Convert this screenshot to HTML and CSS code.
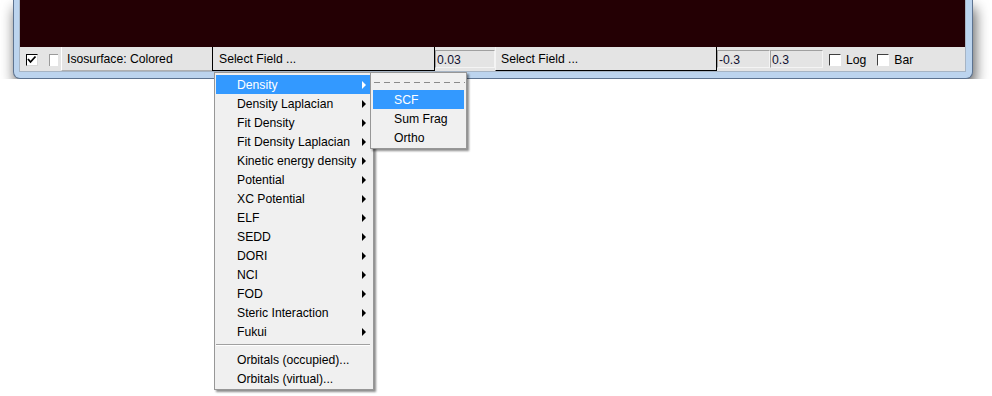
FILE: index.html
```html
<!DOCTYPE html>
<html>
<head>
<meta charset="utf-8">
<link rel="stylesheet" href="styles.css">
</head>
<body>
<div class="win">
  <div class="inner">
    <div class="viewport"></div>
    <div class="bar">
      <span class="cb checked"><svg width="10" height="10" viewBox="0 0 10 10"><path d="M1 4 L3.5 7 L8.5 1.5" fill="none" stroke="#000" stroke-width="1.8"/></svg></span>
      <span class="cb cut"></span>
      <span class="lbl">Isosurface: Colored</span>
      <span class="btn first">Select Field ...</span>
      <span class="field w59">0.03</span>
      <span class="btn second">Select Field ...</span>
      <span class="field w52">-0.3</span>
      <span class="field w52">0.3</span>
      <span class="cb opt"></span><span class="opttext">Log</span>
      <span class="cb opt bar2"></span><span class="opttext">Bar</span>
    </div>
  </div>
</div>

<div class="menu main">
  <div class="item hl">Density<i class="arr"></i></div>
  <div class="item">Density Laplacian<i class="arr"></i></div>
  <div class="item">Fit Density<i class="arr"></i></div>
  <div class="item">Fit Density Laplacian<i class="arr"></i></div>
  <div class="item">Kinetic energy density<i class="arr"></i></div>
  <div class="item">Potential<i class="arr"></i></div>
  <div class="item">XC Potential<i class="arr"></i></div>
  <div class="item">ELF<i class="arr"></i></div>
  <div class="item">SEDD<i class="arr"></i></div>
  <div class="item">DORI<i class="arr"></i></div>
  <div class="item">NCI<i class="arr"></i></div>
  <div class="item">FOD<i class="arr"></i></div>
  <div class="item">Steric Interaction<i class="arr"></i></div>
  <div class="item">Fukui<i class="arr"></i></div>
  <div class="sep"></div>
  <div class="item">Orbitals (occupied)...</div>
  <div class="item">Orbitals (virtual)...</div>
</div>

<div class="menu sub">
  <div class="tear"></div>
  <div class="item hl">SCF</div>
  <div class="item">Sum Frag</div>
  <div class="item">Ortho</div>
</div>
</body>
</html>
```
FILE: styles.css
```css
html, body {
  margin: 0;
  padding: 0;
  background: #ffffff;
  font-family: "Liberation Sans", Arial, sans-serif;
  font-size: 12.2px;
  color: #000;
}

.win {
  margin-left: 13px;
  width: 960px;
  box-sizing: border-box;
  background: #bcd4ee;
  border: 1px solid #5d7390;
  border-top: none;
  border-radius: 0 0 7px 7px;
  padding: 0 6px 6px 6px;
  box-shadow: 2px 8px 14px rgba(0, 0, 0, 0.65);
}

.inner {
  border-right: 1px solid #a6b4c4;
  border-bottom: 1px solid #a6b4c4;
  border-left: 1px solid #a6b4c4;
  margin-left: -1px;
}

.viewport {
  height: 47px;
  background: #240004;
}

.bar {
  height: 24px;
  background: #e4e4e4;
  display: flex;
  align-items: stretch;
  padding-left: 6px;
}

.cb {
  width: 12px;
  height: 12px;
  box-sizing: border-box;
  background: #fff;
  border: 1px solid #000;
  border-right-color: #fff;
  border-bottom-color: #fff;
  align-self: flex-start;
  margin-top: 7px;
  position: relative;
}
.cb.checked {
  border-right-color: #d8d8d8;
  border-bottom-color: #d8d8d8;
}
.cb.checked svg {
  display: block;
  margin: 0;
}
.cb.cut {
  width: 9px;
  margin-left: 11px;
  border-color: #9a9a9a;
  border-right: none;
  border-bottom: none;
}
.cb.opt {
  margin-left: 6px;
  border-color: #404040;
  border-right-color: #fff;
  border-bottom-color: #fff;
}
.cb.bar2 {
  margin-left: 11px;
}

.lbl {
  margin-left: 3px;
  width: 151px;
  box-sizing: border-box;
  border-left: 1px solid #ffffff;
  border-bottom: 1px solid #b0b0b0;
  padding-left: 5px;
  padding-top: 1px;
  display: flex;
  align-items: center;
}

.btn {
  box-sizing: border-box;
  display: flex;
  align-items: center;
  padding-top: 1px;
  border-bottom: 1px solid #000;
  border-right: 1px solid #000;
}
.btn.first {
  width: 223px;
  border-left: 1px solid #000;
  padding-left: 6px;
}
.btn.second {
  width: 222px;
  border-left: 1px solid #f4f4f4;
  padding-left: 5px;
}

.field {
  box-sizing: border-box;
  height: 18px;
  align-self: flex-start;
  margin-top: 3px;
  border: 1px solid #a0a0a0;
  border-right-color: #f4f4f4;
  border-bottom-color: #f4f4f4;
  display: flex;
  align-items: center;
  padding-left: 1px;
  padding-top: 1px;
  color: #101030;
}
.w59 { width: 60px; }
.w52 { width: 53px; }

.opttext {
  display: flex;
  align-items: center;
  margin-left: 5px;
  padding-top: 1px;
}

.menu {
  position: absolute;
  box-sizing: border-box;
  background: #f0f0f0;
  border: 1px solid #979797;
  box-shadow: 2px 2px 2px rgba(0, 0, 0, 0.45);
}
.menu.main {
  left: 214px;
  top: 72px;
  width: 160px;
  padding: 2px 3px 1px 1px;
}
.menu.sub {
  left: 370px;
  top: 72px;
  width: 97px;
  padding: 2px 2px 1px 2px;
}

.item {
  position: relative;
  height: 18px;
  padding-top: 1px;
  line-height: 19px;
  padding-left: 21px;
  white-space: nowrap;
}
.item.hl {
  background: #3399ff;
  color: #fff;
}

.arr {
  position: absolute;
  right: 4px;
  top: 6px;
  width: 0;
  height: 0;
  border-left: 4px solid #000;
  border-top: 4px solid transparent;
  border-bottom: 4px solid transparent;
}
.item.hl .arr {
  border-left-color: #fff;
}

.sep {
  height: 9px;
  box-sizing: border-box;
  padding-top: 3px;
}
.sep::before {
  content: "";
  display: block;
  height: 1px;
  background: #a0a0a0;
  border-bottom: 1px solid #ffffff;
}

.tear {
  height: 15px;
  position: relative;
}
.tear::before {
  content: "";
  position: absolute;
  left: 1px;
  right: -1px;
  top: 7px;
  height: 1px;
  background: repeating-linear-gradient(90deg, #8a8a8a 0 6px, transparent 6px 10px);
}
```
